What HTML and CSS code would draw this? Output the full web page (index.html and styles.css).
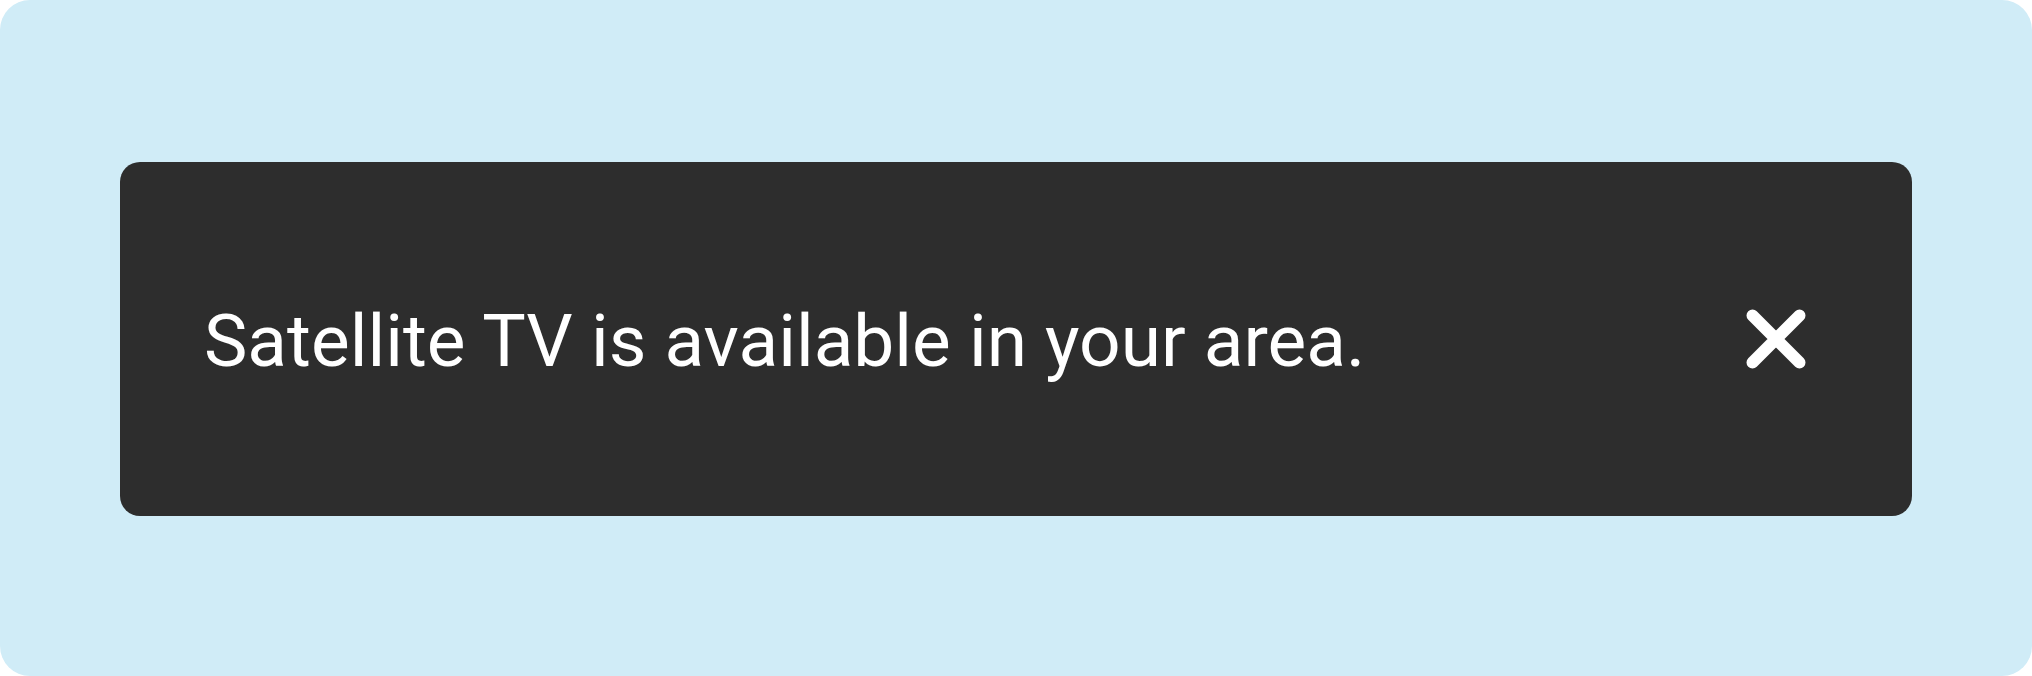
FILE: index.html
```
<!DOCTYPE html>
<html lang="en">
<head>
    <meta charset="UTF-8">
    <meta name="viewport" content="width=device-width, initial-scale=1.0">
    <title>Notification</title>
    <link rel="stylesheet" href="styles.css">
</head>
<body>
    <main class="stage">
        <div class="snackbar" role="status">
            <p class="message">Satellite TV is available in your area.</p>
            <button class="close" type="button" aria-label="Close">
                <svg class="close-icon" viewBox="0 0 60 60" aria-hidden="true">
                    <path d="M6.500 6.500 53.500 53.500M53.500 6.500 6.500 53.500"/>
                </svg>
            </button>
        </div>
    </main>
</body>
</html>
```
FILE: styles.css
```
* {
    box-sizing: border-box;
}
body {
    margin: 0;
    background-color: white;
    font-family: Roboto, Arial, sans-serif;
}
.stage {
    display: flex;
    align-items: center;
    min-height: 100vh;
    padding: 122px 120px 120px;
    background-color: #d0ecf7;
    border-radius: 30px;
}
.snackbar {
    display: flex;
    flex: 1;
    align-items: center;
    justify-content: space-between;
    gap: 40px;
    padding: 132px 106px 132px 84px;
    background-color: #2d2d2d;
    border-radius: 20px;
    color: white;
}
.message {
    margin: 0;
    padding-top: 4px;
    font-size: 73px;
    line-height: 86px;
}
.close {
    flex: none;
    padding: 0;
    border: none;
    background: none;
    color: inherit;
    cursor: pointer;
}
.close-icon {
    display: block;
    width: 60px;
    height: 60px;
    fill: none;
    stroke: currentColor;
    stroke-width: 12;
    stroke-linecap: round;
}
```
